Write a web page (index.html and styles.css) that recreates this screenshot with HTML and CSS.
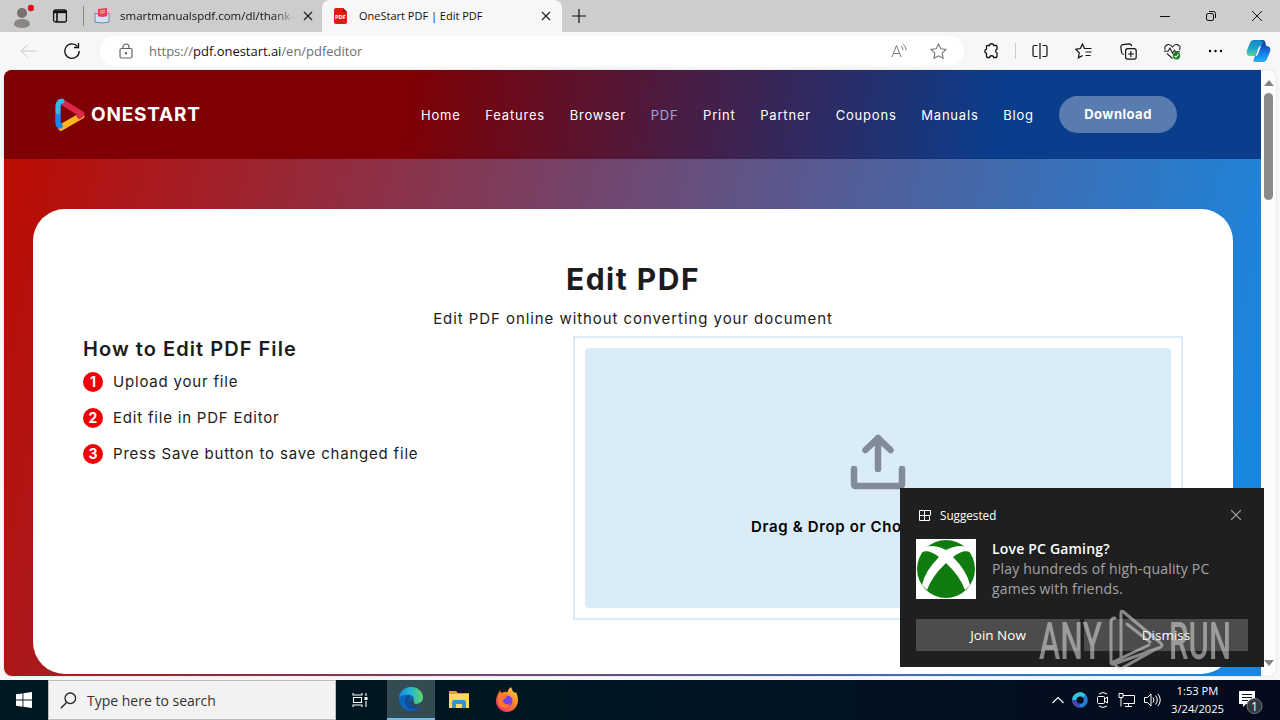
FILE: index.html
```
<!DOCTYPE html>
<html lang="en">
<head>
  <meta charset="UTF-8">
  <title>OneStart PDF | Edit PDF</title>
  <link rel="stylesheet" href="styles.css">
</head>
<body>
  <div class="tabbar">
    <svg class="profile" width="24" height="28" viewBox="0 0 24 28"><circle cx="12" cy="11" r="5" fill="#77716e"/><path d="M4 23c0-4 3-6 8-6s8 2 8 6c-3 4-13 4-16 0z" fill="#8b8683"/><circle cx="21" cy="6" r="3.2" fill="#d9101b"/></svg>
    <svg class="tab-actions" width="16" height="16" viewBox="0 0 16 16" fill="none" stroke="#111" stroke-width="1.3"><rect x="1.6" y="2" width="12.8" height="12" rx="2"/><path d="M1.6 4h12.8" stroke-width="2.4"/><path d="M5 4v10" stroke-width="1.6"/></svg>
    <span class="tab-sep"></span>
    <div class="tab">
      <svg width="16" height="16" viewBox="0 0 16 16"><path d="M1 5l7 3 7-3v9l-7 1-7-1z" fill="#d9e7fa" stroke="#7182a5"/><path d="M4 1l9-1v9H4z" fill="#e94056"/><path d="M6 3l5-.5M6 5l5-.5" stroke="#ffb6bd"/><path d="M2 8l6 1 6-1v5l-6 1-6-1z" fill="#cfe0f8"/></svg>
      <span class="tab-title first">smartmanualspdf.com/dl/thank-</span>
      <svg class="x" width="10" height="10" viewBox="0 0 10 10"><path d="M1 1l8 8M9 1L1 9" stroke="#222" stroke-width="1.3"/></svg>
    </div>
    <div class="tab active">
      <svg width="14" height="16" viewBox="0 0 14 16"><path d="M2 0h7l4 4v10q0 2-2 2H2q-2 0-2-2V2q0-2 2-2z" fill="#e01b14"/><path d="M9 0v4h4z" fill="#a30d0a"/><text x="6.5" y="10.5" text-anchor="middle" font-family="Open Sans, sans-serif" font-size="5.8" font-weight="700" fill="#fff">PDF</text></svg>
      <span class="tab-title">OneStart PDF | Edit PDF</span>
      <svg class="x" width="10" height="10" viewBox="0 0 10 10"><path d="M1 1l8 8M9 1L1 9" stroke="#222" stroke-width="1.2"/></svg>
    </div>
    <svg class="new-tab" width="14" height="14" viewBox="0 0 14 14"><path d="M0 7h14M7 0v14" stroke="#111" stroke-width="1.2"/></svg>
    <div class="window-btns">
      <svg width="10" height="10" viewBox="0 0 10 10"><path d="M0 5.5h10" stroke="#111"/></svg>
      <svg width="10" height="10" viewBox="0 0 10 10" fill="none" stroke="#111"><rect x=".5" y="2.5" width="7" height="7" rx="1.5"/><path d="M3 .5h4.500q2 0 2 2V7"/></svg>
      <svg width="10" height="10" viewBox="0 0 10 10"><path d="M0 0l10 10M10 0L0 10" stroke="#111"/></svg>
    </div>
  </div>

  <div class="toolbar">
    <svg class="back" width="16" height="14" viewBox="0 0 16 14" fill="none" stroke="#c9c9c9"><path d="M16 7H1M7.500 1L1 7l6.500 6"/></svg>
    <svg class="reload" width="16" height="18" viewBox="0 0 16 18" fill="none" stroke="#111" stroke-width="1.3"><path d="M15.200 9A7.200 7.200 0 1 1 13.500 4.500"/><path d="M14.500 1v4.500H10"/></svg>
    <div class="address">
      <svg width="14" height="16" viewBox="0 0 14 16" fill="none" stroke="#666" stroke-width="1.200"><rect x="1" y="5.500" width="12" height="9.500" rx="1.500"/><path d="M4 5.500V4a3 3 0 0 1 6 0v1.500"/><circle cx="7" cy="10.200" r=".6" fill="#666"/></svg>
      <span class="url">https://<b>pdf.onestart.ai</b>/en/pdfeditor</span>
      <svg class="read" width="16" height="16" viewBox="0 0 16 16" fill="none" stroke="#777"><path d="M1 14L5.500 2.500 10 14M2.600 10.500h5.900M10 3q1.700 1.700 2 4M12 1.200q2.800 2 3.200 6"/></svg>
      <svg width="17" height="16" viewBox="0 0 17 16" fill="none" stroke="#777" stroke-width="1.100"><path d="M8.500 1l2.300 4.700 5.200.8-3.800 3.600.9 5.200-4.600-2.500-4.600 2.500.9-5.200L1 6.500l5.200-.8z"/></svg>
    </div>
    <div class="tools">
      <svg width="16" height="18" viewBox="0 0 16 18" fill="none" stroke="#111" stroke-width="1.300"><path d="M4.500 3.500h2a2.200 2.200 0 0 1 4.300 0H13q1 0 1 1v2.700a2 2 0 0 0 0 3.800v3.500q0 1-1 1h-2.200a2.200 2.200 0 0 0-4.300 0h-2q-1 0-1-1v-3a2.200 2.200 0 0 1 0-4.300V4.500q0-1 1-1z"/></svg>
      <span class="tool-sep"></span>
      <svg width="16" height="16" viewBox="0 0 16 16" fill="none" stroke="#111" stroke-width="1.200"><path d="M5.500 2.500H2.500q-1.500 0-1.500 1.500v8q0 1.500 1.500 1.500h3M10.500 2.500h3q1.500 0 1.500 1.500v8q0 1.500-1.500 1.500h-3M8 0v16"/></svg>
      <svg width="17" height="16" viewBox="0 0 17 16" fill="none" stroke="#111" stroke-width="1.200"><path d="M10.500 5.500h-1L7.500 1 5.300 5.500.8 6.300l3.400 3.500-.8 5 4.200-2.400M10.500 5.500h6M10.500 9h6M10.500 12.500h5"/></svg>
      <svg width="17" height="17" viewBox="0 0 17 17" fill="none" stroke="#111" stroke-width="1.200"><rect x="5.600" y="5.600" width="10.600" height="10.600" rx="2.200"/><path d="M10.900 8v6M8 11h6M4 11.500q-2 0-2.400-2L.8 4q0-2 2-2.300L9 .8q2.300 0 2.700 2.400"/></svg>
      <svg width="17" height="17" viewBox="0 0 17 17" fill="none" stroke="#222" stroke-width="1.100"><path d="M1.200 7Q-.3 2.800 3.800 1.600 6.500 1 8.500 4q2-3 4.700-2.400Q17.300 2.800 15.500 7M0 8.200h4l2-3 2.500 5 2-3 1 1.500H16M3 10.500l5.500 5"/><circle cx="12.500" cy="12.800" r="3.700" fill="#13821a" stroke="none"/><path d="M10.500 13l1.500 1.300 2.500-3" stroke="#fff"/></svg>
      <svg width="16" height="4" viewBox="0 0 16 4"><circle cx="2" cy="2" r="1.200"/><circle cx="7.500" cy="2" r="1.200"/><circle cx="13" cy="2" r="1.200"/></svg>
      <svg class="copilot" width="25" height="24" viewBox="0 0 25 24"><defs><linearGradient id="cp1" x2="0" y2="1"><stop stop-color="#1484c8"/><stop offset=".55" stop-color="#20a7c8"/><stop offset="1" stop-color="#5dd894"/></linearGradient><linearGradient id="cp2" x2="0" y2="1"><stop stop-color="#1551bb"/><stop offset=".5" stop-color="#1680ed"/><stop offset="1" stop-color="#29b3f4"/></linearGradient></defs><path d="M8 1h8q2 0 1.300 2L13 15q-.7 2-2.700 2H4q-4 0-3.300-5L4 4q1-3 4-3z" fill="url(#cp1)"/><path d="M17 23H9q-2 0-1.500-2L12 9q.7-2 3-2h5q5 0 4.300 5L21 20q-1 3-4 3z" fill="url(#cp2)"/><path d="M15 7q-2 0-2.600 2L9.500 17q2 0 2.600-2z" fill="#fff"/><path d="M14 1h3q2 0 2.500 3l.8 3h-5l1.700-4z" fill="#174cae"/></svg>
    </div>
  </div>

  <div class="viewport">
    <div class="page">
      <header class="header">
        <div class="logo">
          <svg width="32" height="34" viewBox="0 0 32 34" fill="none" stroke-width="6" stroke-linecap="round" stroke-linejoin="round"><path d="M7 29.500L27 18" stroke="#ffb51d" stroke-width="6.500"/><path d="M8 4l19.500 12-2 2" stroke="#db2748"/><path d="M8 3.500Q4 4 4 9v15q0 3 2 4" stroke="#1688ed" stroke-width="5.500"/><path d="M8 3q-4 0-4 6v5" stroke="#35bce0" stroke-width="4.500"/></svg>
          <span>ONESTART</span>
        </div>
        <nav class="nav">
          <a>Home</a><a>Features</a><a>Browser</a><a class="current">PDF</a><a>Print</a><a>Partner</a><a>Coupons</a><a>Manuals</a><a>Blog</a>
        </nav>
        <a class="download">Download</a>
      </header>
      <main class="card">
        <h1>Edit PDF</h1>
        <p class="subtitle"><span>Edit PDF online without converting your document</span></p>
        <div class="columns">
          <section class="howto">
            <h2>How to Edit PDF File</h2>
            <ul>
              <li><i>1</i><span>Upload your file</span></li>
              <li><i>2</i><span>Edit file in PDF Editor</span></li>
              <li><i>3</i><span>Press Save button to save changed file</span></li>
            </ul>
          </section>
          <section class="upload">
            <div class="dropzone">
              <svg width="56" height="56" viewBox="0 0 56 56" fill="none" stroke="#828c99" stroke-width="6.500" stroke-linecap="round" stroke-linejoin="round"><path d="M28 35V4M15.500 16L28 4l12.500 12M4 35v15q0 2 2 2h44q2 0 2-2V35"/></svg>
              <p>Drag &amp; Drop or Choose File</p>
            </div>
          </section>
        </div>
      </main>
    </div>
    <div class="scrollbar">
      <svg width="10" height="6" viewBox="0 0 10 6"><path d="M0 6l5-6 5 6z" fill="#858585"/></svg>
      <span class="thumb"></span>
      <svg class="down" width="10" height="6" viewBox="0 0 10 6"><path d="M0 0l5 6 5-6z" fill="#858585"/></svg>
    </div>
  </div>

  <div class="taskbar">
    <div class="start"><svg width="16" height="16" viewBox="0 0 16 16" fill="#fff"><path d="M0 2.300L6.500 1.400v6.200H0zM7.400 1.300L16 0v7.600H7.400zM0 8.500h6.500v6.200L0 13.800zM7.400 8.500H16V16l-8.600-1.200z"/></svg></div>
    <div class="search">
      <svg width="17" height="17" viewBox="0 0 17 17" fill="none" stroke="#222" stroke-width="1.300"><circle cx="10.300" cy="6.300" r="5.300"/><path d="M6.500 10.500L.8 16.200"/></svg>
      <span>Type here to search</span>
    </div>
    <div class="task view"><svg width="16" height="16" viewBox="0 0 16 16" fill="none" stroke="#fff" stroke-width="1.100"><path d="M1 1v2h9V1M1 15v-2h9v2M1.500 5.500h8v5h-8zM14 1v3M14 9v6"/><path d="M12.500 5h3v3h-3z" fill="#fff" stroke="none"/></svg></div>
    <div class="task running">
      <svg width="26" height="26" viewBox="0 0 26 26"><defs><linearGradient id="e1"><stop stop-color="#1689dc"/><stop offset=".5" stop-color="#24b8cb"/><stop offset="1" stop-color="#64d75c"/></linearGradient></defs><circle cx="13" cy="13" r="12" fill="#0c65b8"/><path d="M1 13C1 6 6 1 13 1c7 0 12 5 12 10 0 5-4 7-7 7-3 0-5-1-3-3 3-4-2-7-7-6-4 0-7 2-7 4z" fill="url(#e1)"/><path d="M10 9c-3 2-4 6-2 10 2 4 7 6 12 3 2-1 3-3 3-4-3 2-9 1-11-2-2-2-1-5 1-6z" fill="#104c98"/><path d="M16 15c-1 2 1 3 3 3 2 0 4-1 5-3l2 2-2 3c-4 1-9 1-11-2-1-2-1-4 1-5z" fill="#344a4f"/></svg>
    </div>
    <div class="task"><svg width="22" height="20" viewBox="0 0 22 20"><path d="M1 1h7l2 2h11v6H1z" fill="#e5a21b"/><path d="M1 4h20v14H1z" fill="#ffd766"/><path d="M4 18v-6q0-2 2-2h10q2 0 2 2v6h-4v-4H8v4z" fill="#3992cd"/></svg></div>
    <div class="task"><svg width="24" height="26" viewBox="0 0 24 26"><defs><linearGradient id="f1" x1="1" x2=".2" y2="1"><stop stop-color="#ffe43b"/><stop offset=".5" stop-color="#ff802b"/><stop offset="1" stop-color="#f02a67"/></linearGradient></defs><path d="M3 7l2-4 1 3 3-1q3-1 3 1 1-4 4-6 1 4 4 6l1-1q2 4 2 8c0 7-5 12-11 12S1 20 1 14c0-3 1-5 2-7z" fill="url(#f1)"/><circle cx="12" cy="14" r="5.500" fill="#7542e5"/><path d="M4 8q5-2 8 2l-3 2q-2 2 0 4 3 3 6 0-1 5-6 5-6-1-6-8z" fill="#ff792f"/></svg></div>
    <div class="tray">
      <svg width="12" height="8" viewBox="0 0 12 8"><path d="M.5 7L6 1.500 11.500 7" fill="none" stroke="#fff" stroke-width="1.100"/></svg>
      <svg width="16" height="16" viewBox="0 0 16 16" fill="none" stroke-width="4"><circle cx="8" cy="8" r="5.800" stroke="#247ed3"/><path d="M2.200 8A5.800 5.800 0 0 1 12 4" stroke="#33c7d9"/><path d="M2.200 8A5.800 5.800 0 0 0 8 13.800" stroke="#4844ab"/></svg>
      <svg width="14" height="16" viewBox="0 0 14 16" fill="none" stroke="#fff"><rect x="1.500" y="4.500" width="7" height="7" rx="1"/><path d="M8.500 7l3-2v6l-3-2M3 2q4-3 8 0M3 14q4 3 8 0"/></svg>
      <svg width="18" height="16" viewBox="0 0 18 16" fill="none" stroke="#fff"><path d="M5 3.500h11.500v8H5.500M10.500 11.500v3M7 14.500h7M1 1.500h4v4H1zM3 5.500v9"/></svg>
      <svg width="17" height="16" viewBox="0 0 17 16" fill="none" stroke="#fff"><path d="M.5 5.500h3L7 2v12l-3.500-3.500h-3zM9 5.500q2 2.500 0 5M11.500 3.500q3.500 4.500 0 9M14 2q4.500 6 0 12"/></svg>
    </div>
    <div class="clock"><span>1:53 PM</span><span>3/24/2025</span></div>
    <svg class="notify" width="26" height="26" viewBox="0 0 26 26"><path d="M1 3h16v13H8l-3 3v-3H1z" fill="#fff"/><path d="M4 6.500h10M4 9.500h10M4 12.500h6" stroke="#071421" stroke-width="1.200"/><circle cx="16.500" cy="18" r="7.500" fill="#343941" stroke="#727780"/><text x="16.500" y="22.500" text-anchor="middle" font-family="Open Sans, sans-serif" font-size="12" fill="#fff">1</text></svg>
  </div>

  <div class="toast">
    <div class="toast-head">
      <svg width="12" height="12" viewBox="0 0 12 12" fill="none" stroke="#fff"><path d="M.5 1.500h5v10h-5zM.5 6.500h10M5.500 11.500h5v-5M5.500 1.500h6v5"/></svg>
      <span>Suggested</span>
      <svg class="x" width="10" height="10" viewBox="0 0 10 10"><path d="M0 0l10 10M10 0L0 10" stroke="#aaa" stroke-width="1.100"/></svg>
    </div>
    <div class="toast-body">
      <svg width="60" height="60" viewBox="0 0 60 60"><path d="M0 0h60v60H0z" fill="#fff"/><circle cx="30" cy="30" r="29" fill="#107c10"/><path d="M10 8q8-3 20 3 12-6 20-3l4 5q-7-3-17 5 14 14 17 28l-5 5Q44 37 30 24 16 37 11 51l-5-5Q9 32 23 18 13 10 6 13z" fill="#fff"/></svg>
      <div class="toast-text">
        <div class="toast-title">Love PC Gaming?</div>
        <div>Play hundreds of high-quality PC</div>
        <div>games with friends.</div>
      </div>
    </div>
    <div class="toast-btns"><button>Join Now</button><button>Dismiss</button></div>
  </div>

  <svg class="watermark" width="210" height="64" viewBox="0 0 210 64" fill="#ddd">
    <text x="0" y="50" textLength="63" lengthAdjust="spacingAndGlyphs">ANY</text>
    <text x="130" y="50" textLength="62" lengthAdjust="spacingAndGlyphs">RUN</text>
    <path d="M82 51V3.500q0-2 2-1l37 31q4 3 0 5L75 55q-3 1-3-2V13q0-4 4-4M88 15l23 18M110 36L74 53M77 57q4 5 8 1l34-19" fill="none" stroke="#ddd" stroke-width="3" stroke-linejoin="round" stroke-linecap="round"/>
  </svg>
</body>
</html>
```
FILE: styles.css
```
* { box-sizing: border-box; }
body {
  margin: 0;
  width: 1280px;
  height: 720px;
  overflow: hidden;
  background: #f7f7f7;
  font-family: "Open Sans", sans-serif;
  font-size: 12px;
  color: #111;
}
svg { flex: none; display: block; }
h1, h2, p, ul { margin: 0; padding: 0; }

/* browser tabs */
.tabbar {
  height: 32px;
  background: #cdcdcd;
  display: flex;
  align-items: center;
}
.profile { margin-left: 10px; }
.tab-actions { margin-left: 18px; }
.tab-sep {
  width: 1px;
  height: 20px;
  margin-left: 15px;
  background: #888;
}
.tab {
  display: flex;
  align-items: center;
  width: 238px;
  height: 32px;
  padding: 0 9px 0 10px;
}
.tab .x { margin-left: auto; }
.tab.active {
  background: #f7f7f7;
  border-radius: 8px 8px 0 0;
  width: 240px;
  padding: 0 11px 0 12px;
}
.tab-title {
  font-size: 11px;
  line-height: 16px;
  padding-bottom: 1px;
  margin-left: 11px;
  white-space: nowrap;
}
.tab-title.first {
  margin-left: 10px;
  font-size: 11.5px;
  background: linear-gradient(90deg, #111 88%, #bbb);
  -webkit-background-clip: text;
  color: transparent;
}
.new-tab { margin-left: 10px; }
.window-btns {
  margin-left: auto;
  display: flex;
  gap: 36px;
  padding-right: 18px;
}

/* toolbar */
.toolbar {
  height: 38px;
  display: flex;
  align-items: center;
}
.back { margin-left: 20px; }
.reload { margin-left: 28px; }
.address {
  width: 864px;
  height: 30px;
  margin-left: 20px;
  padding: 0 17px 0 19px;
  background: #fff;
  border-radius: 15px;
  display: flex;
  align-items: center;
}
.url {
  margin-left: 16px;
  font-size: 13px;
  letter-spacing: -0.03px;
  color: #707070;
}
.url b {
  font-weight: 400;
  color: #111;
}
.read {
  margin-left: auto;
  margin-right: 23px;
}
.tools {
  flex: 1;
  display: flex;
  align-items: center;
  justify-content: space-between;
  padding: 0 9px 0 19px;
}
.tool-sep {
  width: 1px;
  height: 16px;
  background: #ccc;
  margin: 0 -11px;
}
.copilot { margin-left: -5px; }

/* page */
.viewport {
  width: 1272px;
  height: 606px;
  margin-left: 4px;
  display: flex;
  background: #fcfcfc;
  border-radius: 8px;
  overflow: hidden;
  box-shadow: 0 0 2px #ccc;
}
.page {
  width: 1257px;
  background: linear-gradient(103deg, #ba0d06 3%, #655080 52%, #1b86de 95%);
  font-family: Inter, sans-serif;
}
.header {
  height: 89px;
  background: linear-gradient(98deg, #7f0004 32%, #0a3d8c 79%);
  padding: 0 84px 0 50px;
  display: flex;
  align-items: center;
  color: #fff;
}
.logo {
  display: flex;
  align-items: center;
  gap: 5px;
  width: 367px;
  font-size: 19px;
  font-weight: 700;
  letter-spacing: 0.8px;
}
.nav {
  display: flex;
  gap: 24.7px;
  font-size: 13px;
  letter-spacing: 0.8px;
}
.nav .current { color: #99a9e8; }
.download {
  width: 118px;
  height: 37px;
  margin-left: auto;
  border-radius: 19px;
  background: #587bb0;
  font-size: 13px;
  font-weight: 700;
  letter-spacing: 0.5px;
  line-height: 37px;
  text-align: center;
}
.card {
  width: 1200px;
  height: 465px;
  margin: 50px 0 0 29px;
  border-radius: 32px;
  background: #fff;
  padding: 50px;
  color: #1c1c1c;
}
.card h1 {
  height: 40px;
  font-size: 30px;
  font-weight: 700;
  letter-spacing: 1.5px;
  line-height: 40px;
  text-align: center;
}
.subtitle {
  height: 37px;
  padding-top: 8px;
  font-size: 15px;
  letter-spacing: 0.93px;
  line-height: 24px;
  text-align: center;
}
.columns {
  display: flex;
  justify-content: space-between;
}
.howto h2 {
  height: 26px;
  font-size: 20px;
  font-weight: 600;
  letter-spacing: 1.05px;
  line-height: 26px;
}
.howto li {
  display: flex;
  align-items: center;
  gap: 10px;
  height: 20px;
  margin: 10px 0 16px;
  font-size: 15px;
  letter-spacing: 0.8px;
}
.howto li span { padding-bottom: 2px; }
.howto i {
  width: 20px;
  height: 20px;
  border-radius: 50%;
  background: #f00006;
  color: #fff;
  font-size: 14px;
  font-style: normal;
  font-weight: 700;
  letter-spacing: 0;
  line-height: 20px;
  text-align: center;
}
.upload {
  width: 610px;
  height: 284px;
  padding: 10px;
  border: 2px solid #daecf8;
}
.dropzone {
  height: 260px;
  border-radius: 4px;
  background: #daecf8;
  display: flex;
  flex-direction: column;
  align-items: center;
  padding-top: 86px;
}
.dropzone p {
  margin-top: 27px;
  font-size: 15px;
  font-weight: 600;
  letter-spacing: 0.65px;
  line-height: 20px;
  width: 254px;
  white-space: nowrap;
  color: #000;
}
.scrollbar {
  width: 15px;
  display: flex;
  flex-direction: column;
  align-items: center;
  padding: 10px 0;
}
.thumb {
  width: 9px;
  height: 107px;
  margin-top: 7px;
  border-radius: 5px;
  background: #8a8a8a;
}
.scrollbar .down { margin-top: auto; }

/* windows taskbar */
.taskbar {
  height: 40px;
  margin-top: 4px;
  background: linear-gradient(90deg, #001820, #001622 50%, #040a1c);
  display: flex;
  color: #fff;
}
.start, .task {
  width: 48px;
  display: flex;
  align-items: center;
  justify-content: center;
}
.search {
  width: 288px;
  background: #f2f2f2;
  border: 1px solid #bbb;
  display: flex;
  align-items: center;
  padding-left: 11px;
  color: #333;
  font-size: 14px;
}
.search span { margin-left: 10px; }
.task.running {
  background: #354b52;
  border-bottom: 2px solid #76b9ed;
}
.task.view {
  width: 51px;
  padding-right: 3px;
}
.tray {
  margin-left: auto;
  display: flex;
  align-items: center;
  gap: 8px;
}
.clock {
  width: 73px;
  display: flex;
  flex-direction: column;
  justify-content: center;
  align-items: center;
  line-height: 18px;
  font-size: 11.2px;
}
.notify {
  margin: 8px 16px 0 4px;
}

/* notification toast */
.toast {
  position: absolute;
  left: 900px;
  top: 488px;
  width: 364px;
  height: 179px;
  background: #1f1f1f;
  padding: 16px;
  color: #fff;
}
.toast-head {
  height: 21px;
  display: flex;
  align-items: center;
  padding: 0 7px 0 3px;
  font-size: 11.7px;
}
.toast-head span { margin-left: 9px; }
.toast-head .x { margin-left: auto; }
.toast-body {
  display: flex;
  gap: 16px;
  margin-top: 14px;
}
.toast-text {
  color: #a5a5a5;
  font-size: 14px;
  letter-spacing: 0.18px;
  line-height: 20px;
  white-space: nowrap;
}
.toast-title {
  color: #fff;
  font-weight: 600;
}
.toast-btns {
  display: flex;
  gap: 4px;
  margin-top: 20px;
}
.toast-btns button {
  flex: 1;
  height: 32px;
  border: 0;
  background: #4c4c4c;
  color: #fff;
  font-family: inherit;
  font-size: 13.5px;
}
.watermark {
  position: absolute;
  left: 1039px;
  top: 609px;
  opacity: 0.55;
  overflow: visible;
  font-family: Roboto, sans-serif;
  font-size: 51px;
  font-weight: 500;
}
```
